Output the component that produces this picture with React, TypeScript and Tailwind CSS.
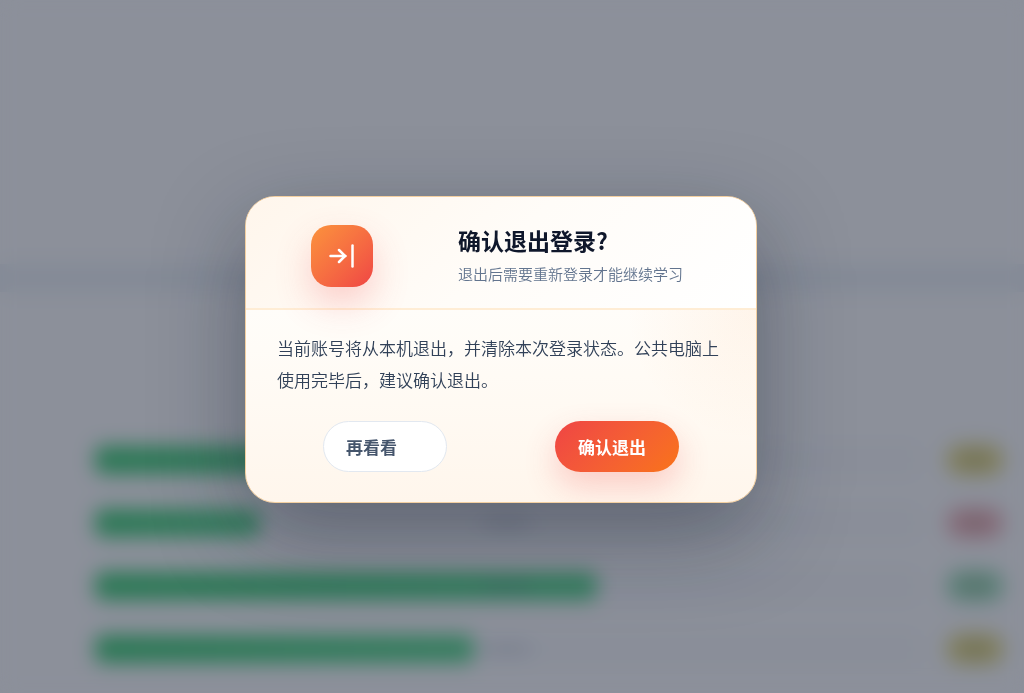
import { clsx } from "clsx";

interface ProgressRow {
  id: number;
  percent: number;
  badge: string;
}

const rows: ProgressRow[] = [
  { id: 1, percent: 38, badge: "bg-[#dcd488]" },
  { id: 2, percent: 20, badge: "bg-[#e6b3ba]" },
  { id: 3, percent: 61, badge: "bg-[#9ad6b6]" },
  { id: 4, percent: 46, badge: "bg-[#dcd488]" },
  { id: 5, percent: 14, badge: "bg-[#e6b3ba]" },
];

// Study progress list that stays behind the dialog
function ProgressPage() {
  return (
    <div className="h-full overflow-hidden bg-[#f2f4f6]" aria-hidden="true">
      <div className="mt-[264px] h-7 bg-[#e4eaf0]" />
      <div className="mt-[136px] flex flex-col pr-[20px] pl-[95px]">
        {rows.map((row) => (
          <div key={row.id} className="flex h-[63px] items-center gap-7">
            <div className="grid h-7 flex-1 items-center rounded-lg bg-[#edf0f4]">
              <div
                className="col-start-1 row-start-1 h-7 rounded-lg bg-linear-to-r from-[#42c778] to-[#58d28c]"
                style={{ width: `${row.percent}%` }}
              />
              <div className="col-start-1 row-start-1 h-3 w-12 justify-self-center rounded-full bg-slate-500/20" />
            </div>
            <div className={clsx("flex h-8 w-[58px] items-center justify-center rounded-full", row.badge)}>
              <div className="h-3 w-6 rounded-full bg-[#6b5b4c]/25" />
            </div>
          </div>
        ))}
      </div>
    </div>
  );
}

function LogoutIcon() {
  return (
    <svg width="28" height="28" viewBox="0 0 28 28" fill="none" stroke="currentColor" strokeWidth="2.5" strokeLinecap="round" strokeLinejoin="round" aria-hidden="true">
      <path d="M2.5 14h15" />
      <path d="M11 8l6 6-6 6" />
      <path d="M24.5 3.5v21" />
    </svg>
  );
}

function LogoutDialog() {
  return (
    <div
      role="dialog"
      aria-modal="true"
      aria-labelledby="logout-title"
      aria-describedby="logout-text"
      className="w-full max-w-[512px] overflow-hidden rounded-[30px] border border-[#f3cfa0] bg-linear-to-b from-white via-[#fffcf7] to-[#fff6ec] shadow-[0_30px_90px_rgba(15,23,42,0.38)]"
    >
      {/* Header */}
      <div className="flex items-start gap-[51px] border-b-2 border-[#ffedd5] bg-linear-135 from-[#fff6ec] via-[#fffcf8] to-white px-[31px] pt-7 pb-[21px]">
        <div className="flex w-[130px] shrink-0 justify-center">
          <div className="relative flex size-[62px] items-center justify-center rounded-[20px] bg-linear-135 from-[#fb923c] to-[#ef4444] text-white shadow-[0_16px_36px_rgba(239,68,68,0.24)]">
            <LogoutIcon />
          </div>
        </div>
        <div>
          <h2 id="logout-title" className="text-[23px] leading-[30px] font-bold text-slate-900">
            确认退出登录?
          </h2>
          <p className="mt-[7px] text-[15px] leading-6 font-[350] text-slate-500">退出后需要重新登录才能继续学习</p>
        </div>
      </div>

      {/* Content */}
      <div className="bg-[radial-gradient(circle_at_100%_0%,rgba(251,146,60,0.08),transparent_130px)] px-[31px] pt-[22px] pb-[30px]">
        <p id="logout-text" className="text-[17px] leading-8 font-[350] text-slate-700">
          当前账号将从本机退出，并清除本次登录状态。公共电脑上使用完毕后，建议确认退出。
        </p>
        <div className="mt-[25px] grid grid-cols-2 justify-items-center gap-4">
          <button
            type="button"
            className="h-[51px] w-[124px] rounded-full border border-slate-200 bg-white px-[22px] text-left text-[17px] font-bold text-slate-600"
          >
            再看看
          </button>
          <button
            type="button"
            className="h-[51px] w-[124px] rounded-full bg-linear-135 from-[#ef4444] to-[#f97316] px-[23px] text-left text-[17px] font-bold whitespace-nowrap text-white shadow-[0_14px_32px_rgba(239,68,68,0.24)]"
          >
            确认退出
          </button>
        </div>
      </div>
    </div>
  );
}

export default function App() {
  return (
    <main className="h-screen overflow-hidden font-['Noto_Sans_CJK_SC',sans-serif]">
      <ProgressPage />
      <div className="fixed inset-0 flex items-center justify-center bg-slate-900/45 pt-1.5 pr-[22px] backdrop-blur-[10px]">
        <LogoutDialog />
      </div>
    </main>
  );
}
